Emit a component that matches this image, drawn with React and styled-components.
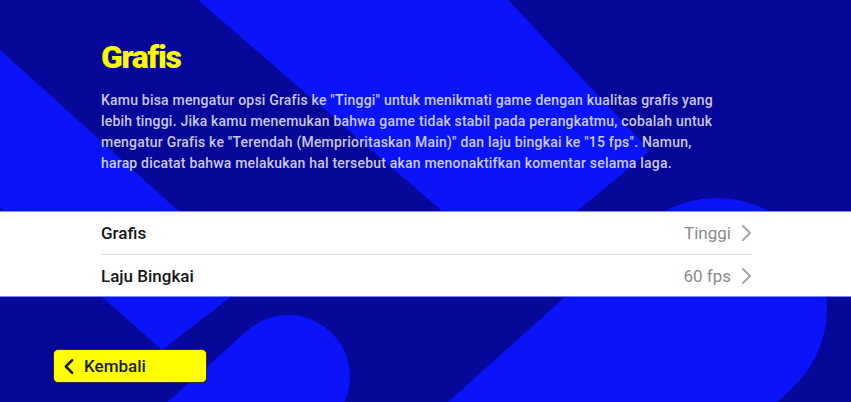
import React from 'react';
import styled, { createGlobalStyle } from 'styled-components';

const GlobalStyle = createGlobalStyle`
  html, body {
    margin: 0;
    padding: 0;
    background: #07079a;
  }
  * {
    box-sizing: border-box;
  }
`;

const Page = styled.div`
  position: relative;
  width: 100%;
  height: 100vh;
  overflow: hidden;
  background: #07079a;
  font-family: Roboto, "Noto Sans", sans-serif;
  display: flex;
  flex-direction: column;
`;

const Backdrop = styled.svg`
  position: absolute;
  inset: 0;
  width: 100%;
  height: 100%;
  z-index: 0;
`;

const Content = styled.div`
  position: relative;
  z-index: 1;
  display: flex;
  flex-direction: column;
  flex: 1;
`;

const Header = styled.header`
  padding: 39px 101px 0;
`;

const Title = styled.h1`
  margin: 0;
  font-size: 32px;
  line-height: 36px;
  font-weight: 900;
  letter-spacing: -1.3px;
  color: #f9f900;
`;

const Description = styled.p`
  margin: 15px 0 0;
  font-size: 14px;
  line-height: 21px;
  font-weight: 500;
  letter-spacing: 0.2px;
  color: rgba(255, 255, 255, 0.78);
  white-space: nowrap;
`;

const SettingsPanel = styled.section`
  margin-top: 38px;
  background: #ffffff;
  padding: 0 99px 0 101px;
  box-shadow: 0 -1px 0 #7f86ff, 0 1px 0 #7f86ff;
`;

const SettingRow = styled.div`
  display: flex;
  align-items: center;
  justify-content: space-between;
  height: 42px;

  & + & {
    border-top: 1px solid #dcdcdc;
  }
`;

const SettingLabel = styled.span`
  font-size: 17px;
  font-weight: 500;
  color: #161616;
`;

const SettingValue = styled.span`
  display: flex;
  align-items: center;
  gap: 10px;
  font-size: 17px;
  font-weight: 400;
  color: #8a8a8a;
`;

const Footer = styled.footer`
  padding: 53px 0 0 53px;
`;

const BackButton = styled.button`
  display: flex;
  align-items: center;
  gap: 10px;
  width: 154px;
  height: 34px;
  padding: 0 0 0 10px;
  border: 1px solid #2a2a3a;
  border-radius: 5px;
  background: #ffff00;
  color: #1c1c3c;
  font-family: inherit;
  font-size: 17px;
  font-weight: 500;
  cursor: pointer;
`;

const Chevron = ({ dir = 'right', color, width = 11, height = 18, stroke = 2.2 }) => (
  <svg width={width} height={height} viewBox="0 0 11 18" fill="none">
    <path
      d={dir === 'right' ? 'M2 2 L9 9 L2 16' : 'M9 2 L2 9 L9 16'}
      stroke={color}
      strokeWidth={stroke}
      strokeLinecap="round"
      strokeLinejoin="round"
    />
  </svg>
);

const BRIGHT = '#0a14f8';

const settings = [
  { label: 'Grafis', value: 'Tinggi' },
  { label: 'Laju Bingkai', value: '60 fps' },
];

export default function App() {
  return (
    <>
      <GlobalStyle />
      <Page>
        <Backdrop viewBox="0 0 851 402" preserveAspectRatio="none">
          <polygon points="0,50 254,279 162,350 0,207" fill={BRIGHT} />
          <path
            d="M198 0 L508 0 L646 146 Q650 151 645 155 L508 268 Z"
            fill={BRIGHT}
          />
          <g transform="translate(717 308) rotate(138)">
            <rect x="-110" y="-110" width="800" height="220" rx="110" fill={BRIGHT} />
          </g>
          <g transform="translate(288 377) rotate(138)">
            <rect x="-62" y="-62" width="600" height="124" rx="62" fill={BRIGHT} />
          </g>
        </Backdrop>
        <Content>
          <Header>
            <Title>Grafis</Title>
            <Description>
              Kamu bisa mengatur opsi Grafis ke "Tinggi" untuk menikmati game dengan kualitas grafis yang
              <br />
              lebih tinggi. Jika kamu menemukan bahwa game tidak stabil pada perangkatmu, cobalah untuk
              <br />
              mengatur Grafis ke "Terendah (Memprioritaskan Main)" dan laju bingkai ke "15 fps". Namun,
              <br />
              harap dicatat bahwa melakukan hal tersebut akan menonaktifkan komentar selama laga.
            </Description>
          </Header>
          <SettingsPanel>
            {settings.map((s) => (
              <SettingRow key={s.label}>
                <SettingLabel>{s.label}</SettingLabel>
                <SettingValue>
                  {s.value}
                  <Chevron color="#a9a9a9" />
                </SettingValue>
              </SettingRow>
            ))}
          </SettingsPanel>
          <Footer>
            <BackButton>
              <Chevron dir="left" color="#1c1c3c" width={10} height={17} stroke={2.8} />
              Kembali
            </BackButton>
          </Footer>
        </Content>
      </Page>
    </>
  );
}
